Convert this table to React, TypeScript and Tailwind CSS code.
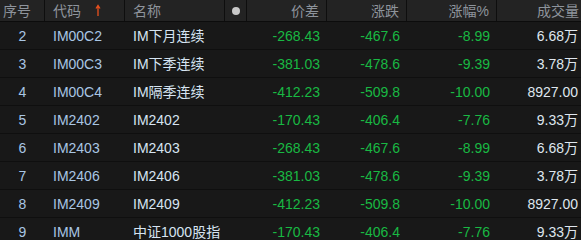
const ROWS = [
  { no: 2, code: "IM00C2", name: "IM下月连续", spread: "-268.43", change: "-467.6", pct: "-8.99", vol: "6.68万" },
  { no: 3, code: "IM00C3", name: "IM下季连续", spread: "-381.03", change: "-478.6", pct: "-9.39", vol: "3.78万" },
  { no: 4, code: "IM00C4", name: "IM隔季连续", spread: "-412.23", change: "-509.8", pct: "-10.00", vol: "8927.00" },
  { no: 5, code: "IM2402", name: "IM2402", spread: "-170.43", change: "-406.4", pct: "-7.76", vol: "9.33万" },
  { no: 6, code: "IM2403", name: "IM2403", spread: "-268.43", change: "-467.6", pct: "-8.99", vol: "6.68万" },
  { no: 7, code: "IM2406", name: "IM2406", spread: "-381.03", change: "-478.6", pct: "-9.39", vol: "3.78万" },
  { no: 8, code: "IM2409", name: "IM2409", spread: "-412.23", change: "-509.8", pct: "-10.00", vol: "8927.00" },
  { no: 9, code: "IMM", name: "中证1000股指", spread: "-170.43", change: "-406.4", pct: "-7.76", vol: "9.33万" },
];

const COLS = "grid grid-cols-[45px_80px_100px_22px_80px_80px_90px_84px]";

function SortArrow() {
  return (
    <svg width="6" height="13" viewBox="0 0 6 13" className="ml-[14px]">
      <path d="M3 12V2M1 4.5L3 1.5L5 4.5" stroke="#e8501e" strokeWidth="1.3" fill="none" />
    </svg>
  );
}

export default function App() {
  return (
    <div
      className="w-[581px] h-[240px] overflow-hidden bg-[#181818] text-[14px] leading-none"
      style={{ fontFamily: '"Liberation Sans", "Noto Sans CJK SC", sans-serif' }}
    >
      <div className={`${COLS} h-[22px] bg-[#232323] border-b border-[#0c0c0c] text-[#8e949c]`}>
        <div className="flex items-center pl-[3px] border-r border-[#0e0e0e]">序号</div>
        <div className="flex items-center pl-[8px] border-r border-[#0e0e0e]">
          代码
          <SortArrow />
        </div>
        <div className="flex items-center pl-[8px] border-r border-[#0e0e0e]">名称</div>
        <div className="flex items-center justify-center border-r border-[#0e0e0e]">
          <span className="w-2 h-2 rounded-full bg-[#c8c8c8]" />
        </div>
        <div className="flex items-center justify-end pr-[7px] border-r border-[#0e0e0e]">价差</div>
        <div className="flex items-center justify-end pr-[7px] border-r border-[#0e0e0e]">涨跌</div>
        <div className="flex items-center justify-end pr-[7px] border-r border-[#0e0e0e]">涨幅%</div>
        <div className="flex items-center justify-end pr-[2px]">成交量</div>
      </div>
      {ROWS.map((r) => (
        <div key={r.no} className={`${COLS} h-[28px] border-b border-[#0f0f0f] items-center`}>
          <div className="text-center text-[#a9c6e4]">{r.no}</div>
          <div className="pl-[8px] text-[#a9c6e4]">{r.code}</div>
          <div className="pl-[8px] text-[#d6e4f2] whitespace-nowrap">{r.name}</div>
          <div />
          <div className="text-right pr-[7px] text-[#19b843]">{r.spread}</div>
          <div className="text-right pr-[7px] text-[#19b843]">{r.change}</div>
          <div className="text-right pr-[7px] text-[#19b843]">{r.pct}</div>
          <div className="text-right pr-[3px] text-[#dfe6ee]">{r.vol}</div>
        </div>
      ))}
    </div>
  );
}
